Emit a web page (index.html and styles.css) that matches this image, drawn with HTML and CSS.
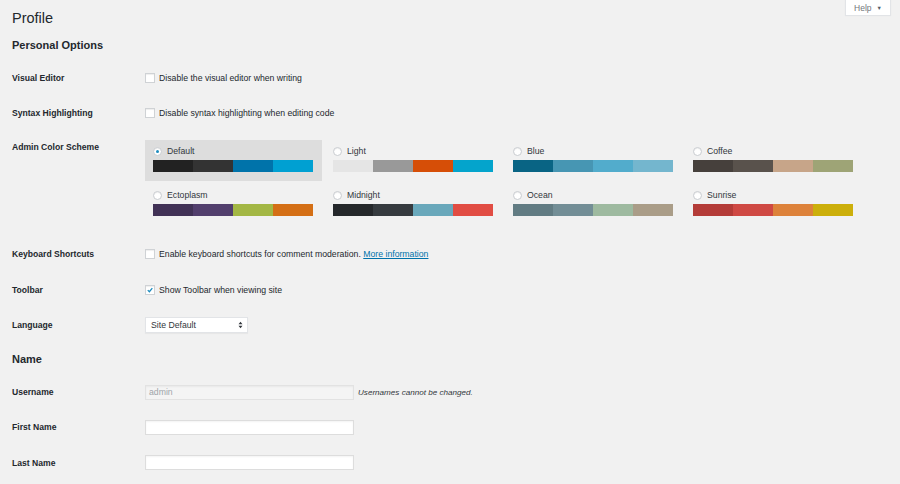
FILE: index.html
```html
<!DOCTYPE html>
<html lang="en">
<head>
<meta charset="utf-8">
<title>Profile</title>
<link rel="stylesheet" href="styles.css">
</head>
<body>
<div class="help-tab">Help <span class="caret">▼</span></div>
<div class="wrap">
  <h1 class="page-title">Profile</h1>
  <h2 class="section-title first">Personal Options</h2>

  <div class="row">
    <div class="label">Visual Editor</div>
    <div class="field"><span class="checkbox"></span><span>Disable the visual editor when writing</span></div>
  </div>
  <div class="row">
    <div class="label">Syntax Highlighting</div>
    <div class="field"><span class="checkbox"></span><span>Disable syntax highlighting when editing code</span></div>
  </div>
  <div class="row row-top">
    <div class="label">Admin Color Scheme</div>
    <div class="schemes">
      <div class="scheme selected">
        <div class="scheme-name"><span class="radio checked"></span>Default</div>
        <div class="swatch"><i class="c1"></i><i class="c2"></i><i class="c3"></i><i class="c4"></i></div>
      </div>
      <div class="scheme">
        <div class="scheme-name"><span class="radio"></span>Light</div>
        <div class="swatch"><i class="l1"></i><i class="l2"></i><i class="l3"></i><i class="l4"></i></div>
      </div>
      <div class="scheme">
        <div class="scheme-name"><span class="radio"></span>Blue</div>
        <div class="swatch"><i class="b1"></i><i class="b2"></i><i class="b3"></i><i class="b4"></i></div>
      </div>
      <div class="scheme">
        <div class="scheme-name"><span class="radio"></span>Coffee</div>
        <div class="swatch"><i class="f1"></i><i class="f2"></i><i class="f3"></i><i class="f4"></i></div>
      </div>
      <div class="scheme">
        <div class="scheme-name"><span class="radio"></span>Ectoplasm</div>
        <div class="swatch"><i class="e1"></i><i class="e2"></i><i class="e3"></i><i class="e4"></i></div>
      </div>
      <div class="scheme">
        <div class="scheme-name"><span class="radio"></span>Midnight</div>
        <div class="swatch"><i class="m1"></i><i class="m2"></i><i class="m3"></i><i class="m4"></i></div>
      </div>
      <div class="scheme">
        <div class="scheme-name"><span class="radio"></span>Ocean</div>
        <div class="swatch"><i class="o1"></i><i class="o2"></i><i class="o3"></i><i class="o4"></i></div>
      </div>
      <div class="scheme">
        <div class="scheme-name"><span class="radio"></span>Sunrise</div>
        <div class="swatch"><i class="s1"></i><i class="s2"></i><i class="s3"></i><i class="s4"></i></div>
      </div>
    </div>
  </div>
  <div class="row">
    <div class="label">Keyboard Shortcuts</div>
    <div class="field"><span class="checkbox"></span><span>Enable keyboard shortcuts for comment moderation. <a href="#" class="link">More information</a></span></div>
  </div>
  <div class="row">
    <div class="label">Toolbar</div>
    <div class="field"><span class="checkbox checked"><svg viewBox="0 0 10 10" width="10" height="10"><path d="M2.2 5.2 L4.2 7.2 L7.9 2.6" fill="none" stroke="#1e8cbe" stroke-width="1.6"/></svg></span><span>Show Toolbar when viewing site</span></div>
  </div>
  <div class="row">
    <div class="label">Language</div>
    <div class="field"><span class="select">Site Default<svg class="updown" viewBox="0 0 6 10" width="5" height="8"><path d="M0.5 4 L3 1 L5.5 4 Z M0.5 6 L3 9 L5.5 6 Z" fill="#32373c"/></svg></span></div>
  </div>

  <h2 class="section-title">Name</h2>

  <div class="row">
    <div class="label">Username</div>
    <div class="field"><span class="input disabled">admin</span><span class="desc">Usernames cannot be changed.</span></div>
  </div>
  <div class="row">
    <div class="label">First Name</div>
    <div class="field"><span class="input"></span></div>
  </div>
  <div class="row">
    <div class="label">Last Name</div>
    <div class="field"><span class="input"></span></div>
  </div>
</div>
</body>
</html>
```
FILE: styles.css
```css
* { box-sizing: border-box; }
html, body { margin: 0; padding: 0; }
body {
  background: #f1f1f1;
  color: #23282d;
  font-family: "Liberation Sans", Arial, sans-serif;
  font-size: 8.7px;
  width: 900px;
  height: 484px;
  overflow: hidden;
  position: relative;
}
.wrap { padding-left: 12px; }

.help-tab {
  position: absolute;
  top: -1px;
  left: 845px;
  width: 46px;
  height: 17px;
  background: #fff;
  border: 1px solid #e2e4e7;
  box-shadow: 0 0 1px rgba(0,0,0,0.06);
  color: #72777c;
  font-size: 8.5px;
  display: flex;
  align-items: center;
  justify-content: center;
  gap: 5px;
}
.help-tab .caret { font-size: 5.5px; color: #555d66; }

.page-title {
  margin: 0;
  padding-top: 9px;
  font-size: 14.5px;
  font-weight: 400;
  line-height: 18px;
  color: #23282d;
}
.section-title {
  margin: 9px 0 7px;
  font-size: 11px;
  line-height: 16px;
  font-weight: 700;
}
.section-title.first { margin-top: 10px; margin-bottom: 7px; }

.row {
  display: grid;
  grid-template-columns: 133px 1fr;
  align-items: center;
  height: 35.3px;
}
.row-top {
  align-items: start;
  height: 106px;
  padding-top: 9px;
}
.row-top .label { padding-top: 2px; }
.label {
  font-weight: 700;
  font-size: 8.6px;
}
.field {
  display: flex;
  align-items: center;
  gap: 4px;
}
.checkbox {
  width: 10px;
  height: 10px;
  background: #fff;
  border: 1px solid #cfd2d5;
  box-shadow: inset 0 1px 1px rgba(0,0,0,0.07);
  display: inline-flex;
  align-items: center;
  justify-content: center;
  flex: none;
}
.checkbox svg { display: block; }
.link { color: #0073aa; text-decoration: underline; }

.schemes {
  display: grid;
  grid-template-columns: repeat(4, 177px);
  column-gap: 3px;
  row-gap: 3px;
}
.scheme {
  height: 41px;
  padding: 7px 9px 0 8px;
}
.scheme.selected { background: #dddddd; }
.scheme-name {
  display: flex;
  align-items: center;
  gap: 5px;
  height: 9px;
  color: #32373c;
}
.radio {
  width: 9px;
  height: 9px;
  border-radius: 50%;
  background: #fff;
  border: 1px solid #c9ccd0;
  box-shadow: inset 0 1px 1px rgba(0,0,0,0.07);
  flex: none;
  display: inline-flex;
  align-items: center;
  justify-content: center;
}
.radio.checked::after {
  content: "";
  width: 3px;
  height: 3px;
  border-radius: 50%;
  background: #1e8cbe;
}
.swatch {
  display: flex;
  margin-top: 4px;
  height: 12px;
  width: 160px;
}
.swatch i { flex: 1; display: block; }
.c1 { background: #222222; } .c2 { background: #333333; } .c3 { background: #0073aa; } .c4 { background: #00a0d2; }
.l1 { background: #e5e5e5; } .l2 { background: #999999; } .l3 { background: #d64e07; } .l4 { background: #04a4cc; }
.b1 { background: #096484; } .b2 { background: #4796b3; } .b3 { background: #52accc; } .b4 { background: #74b6ce; }
.f1 { background: #46403c; } .f2 { background: #59524c; } .f3 { background: #c7a589; } .f4 { background: #9ea476; }
.e1 { background: #413256; } .e2 { background: #523f6d; } .e3 { background: #a3b745; } .e4 { background: #d46f15; }
.m1 { background: #25282b; } .m2 { background: #363b3f; } .m3 { background: #69a8bb; } .m4 { background: #e14d43; }
.o1 { background: #627c83; } .o2 { background: #738e96; } .o3 { background: #9ebaa0; } .o4 { background: #aa9d88; }
.s1 { background: #b43c38; } .s2 { background: #cf4944; } .s3 { background: #dd823b; } .s4 { background: #ccaf0b; }

.select {
  width: 103px;
  height: 16px;
  background: #fff;
  border: 1px solid #e2e4e7;
  box-shadow: 0 1px 1px rgba(0,0,0,0.04);
  display: flex;
  align-items: center;
  justify-content: space-between;
  padding: 0 4px 0 5px;
  color: #32373c;
}
.updown { display: block; }

.input {
  width: 209px;
  height: 15px;
  background: #fff;
  border: 1px solid #dddddd;
  box-shadow: inset 0 1px 2px rgba(0,0,0,0.05);
  display: flex;
  align-items: center;
  padding-left: 3px;
  color: #32373c;
}
.input.disabled {
  background: #f4f4f4;
  color: #a0a5aa;
  border-color: #e2e2e2;
}
.desc {
  font-style: italic;
  font-size: 8.1px;
  color: #32373c;
  margin-left: 0;
}
```
